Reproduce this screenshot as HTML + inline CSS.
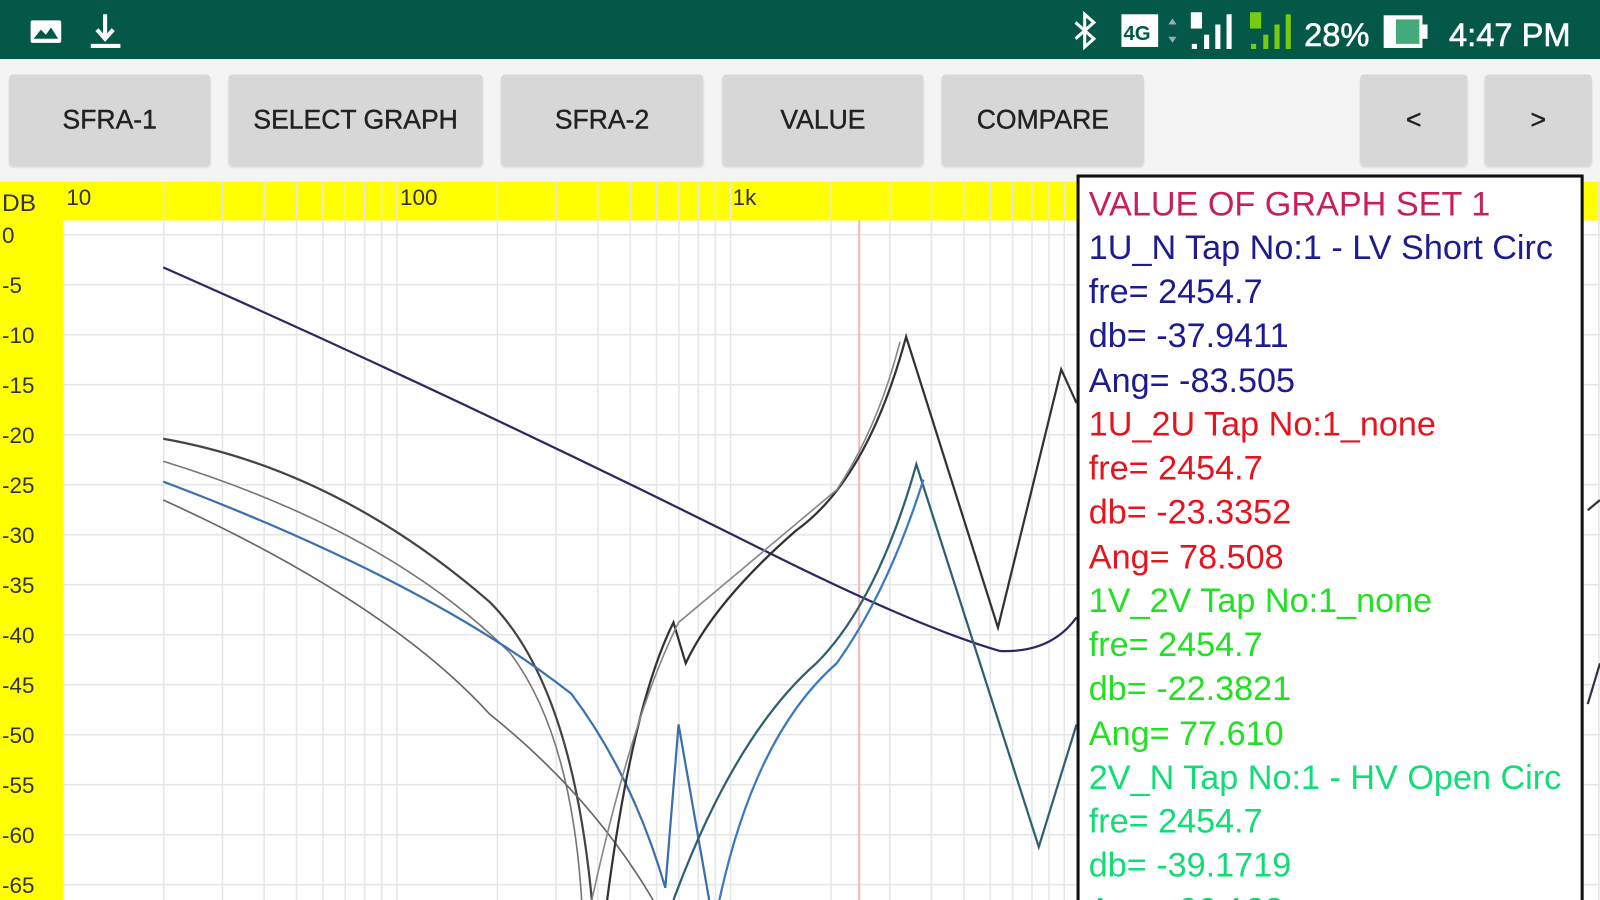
<!DOCTYPE html>
<html><head><meta charset="utf-8"><style>
html,body{margin:0;padding:0;width:1600px;height:900px;overflow:hidden;background:#fff;font-family:"Liberation Sans",sans-serif}
#w{position:absolute;left:0;top:0;width:1568px;height:882px;overflow:hidden;transform-origin:0 0;transform:scale(1.020408,1.020408)}
.sb{position:absolute;left:0;top:0;width:1568px;height:58px;background:#035847}
.tb{position:absolute;left:0;top:58px;width:1568px;height:120px;background:#f4f4f4}
.btn{position:absolute;top:73px;height:89px;background:#d7d7d7;border-radius:4px;box-shadow:0 2px 2px rgba(0,0,0,.12);font-size:26px;color:#222;display:flex;align-items:center;justify-content:center;-webkit-text-stroke:0.4px #222}
.yl{position:absolute;left:0;top:216px;width:62px;height:666px;background:#ffff00}
.yt{position:absolute;left:0;top:178px;width:1568px;height:38px;background:#ffff00}
.box{position:absolute;left:1055px;top:171px;width:491px;height:740px;background:#fff;border:3px solid #111;overflow:hidden}
.box div{position:absolute;left:9px;font-size:33.5px;white-space:nowrap}
</style></head><body><div id="w">
<div class="sb"></div>
<svg style="position:absolute;left:0;top:0" width="1568" height="58">
<rect x="30" y="20" width="30" height="22" fill="#fff" rx="2"/><path d="M33 38 L40 29 L45 34 L50 27 L57 38Z" fill="#035847"/>
<path d="M103 14 V36 M95 29 L103 38 L111 29" stroke="#fff" stroke-width="4" fill="none"/><rect x="89" y="43" width="29" height="4" fill="#fff"/>
<path d="M1054 22 L1072 38 L1063 46 V14 L1072 22 L1054 38" stroke="#fff" stroke-width="3" fill="none"/>
<rect x="1099" y="14" width="36" height="32" fill="#fff"/><text x="1101" y="39" font-size="20" font-weight="bold" fill="#035847" font-family="Liberation Sans">4G</text>
<path d="M1145 24 l4 -6 l4 6z M1145 36 l4 6 l4 -6z" fill="#9ab"/>
<rect x="1167" y="12" width="11" height="16" fill="#fff"/><rect x="1168" y="43" width="5" height="5" fill="#fff"/><rect x="1180" y="34" width="5" height="14" fill="#fff"/><rect x="1191" y="24" width="5" height="24" fill="#fff"/><rect x="1202" y="14" width="5" height="34" fill="#fff"/>
<rect x="1225" y="12" width="11" height="16" fill="#7c1"/><rect x="1226" y="43" width="5" height="5" fill="#7c1"/><rect x="1238" y="34" width="5" height="14" fill="#7c1"/><rect x="1249" y="24" width="5" height="24" fill="#7c1"/><rect x="1260" y="14" width="5" height="34" fill="#7c1"/>
<text x="1278" y="45" font-size="32" fill="#fff" stroke="#fff" stroke-width="0.6" font-family="Liberation Sans">28%</text>
<rect x="1356" y="15" width="38" height="32" fill="#fff"/><rect x="1368" y="19" width="23" height="24" fill="#4a7"/><rect x="1394" y="24" width="5" height="14" fill="#fff"/>
<text x="1420" y="45" font-size="32" fill="#fff" stroke="#fff" stroke-width="0.6" font-family="Liberation Sans">4:47 PM</text>
</svg>
<div class="tb"></div>
<div class="btn" style="left:9px;width:197px">SFRA-1</div>
<div class="btn" style="left:224px;width:249px">SELECT GRAPH</div>
<div class="btn" style="left:491px;width:198px">SFRA-2</div>
<div class="btn" style="left:708px;width:197px">VALUE</div>
<div class="btn" style="left:923px;width:198px">COMPARE</div>
<div class="btn" style="left:1333px;width:105px">&lt;</div>
<div class="btn" style="left:1455px;width:105px">&gt;</div>
<div class="yt"></div><div class="yl"></div>
<svg style="position:absolute;left:0;top:0" width="1568" height="882" id="g">
<g stroke="#e6e6e6" stroke-width="1.5" fill="none" id="grid"></g>
<line x1="842" y1="216" x2="842" y2="882" stroke="#f2b8b8" stroke-width="2"/>
<g fill="none" stroke-width="2.2">
<path d="M160 262 Q450 390 750 540 Q900 615 980 638 Q1030 640 1055 605" stroke="#2a2a60"/>
<path d="M160 430 Q330 460 480 590 Q560 670 580 882" stroke="#444"/>
<path d="M160 452 Q380 520 500 640 Q560 720 570 882" stroke="#777" stroke-width="1.6"/>
<path d="M160 490 Q380 590 480 700 Q580 780 640 882" stroke="#666" stroke-width="1.6"/>
<path d="M160 472 Q420 570 560 680 Q620 760 652 870 L665 710 L695 882" stroke="#3a70b0"/>
<path d="M595 882 Q620 690 660 610 L672 650 Q700 590 780 520 Q850 470 888 330 L978 615 L1040 362 L1055 395" stroke="#333"/>
<path d="M580 882 Q620 700 665 610 Q760 530 820 480 Q860 420 882 335" stroke="#888" stroke-width="1.6"/>
<path d="M660 882 Q720 720 800 650 Q860 590 898 455 L1018 830 L1055 710" stroke="#2e6070"/>
<path d="M705 882 Q740 720 820 650 Q870 580 905 470" stroke="#3a7ac0"/>
<path d="M1556 500 L1568 490 M1556 690 L1568 650" stroke="#334"/>
</g>
<g font-family="Liberation Sans" font-size="22" fill="#333">
<text x="2" y="207" font-size="24">DB</text><text x="65" y="201">10</text><text x="392" y="201">100</text><text x="718" y="201">1k</text>
<text x="2" y="238">0</text><text x="2" y="287">-5</text><text x="2" y="336">-10</text><text x="2" y="385">-15</text><text x="2" y="434">-20</text><text x="2" y="483">-25</text><text x="2" y="532">-30</text><text x="2" y="581">-35</text><text x="2" y="630">-40</text><text x="2" y="679">-45</text><text x="2" y="728">-50</text><text x="2" y="777">-55</text><text x="2" y="826">-60</text><text x="2" y="875">-65</text>
</g>
</svg>
<div class="box">
<div style="top:8px;color:#c81e5a">VALUE OF GRAPH SET 1</div>
<div style="top:51px;color:#1c1c90">1U_N Tap No:1 - LV Short Circ</div>
<div style="top:94px;color:#1c1c90">fre= 2454.7</div>
<div style="top:137px;color:#1c1c90">db= -37.9411</div>
<div style="top:181px;color:#1c1c90">Ang= -83.505</div>
<div style="top:224px;color:#e5141e">1U_2U Tap No:1_none</div>
<div style="top:267px;color:#e5141e">fre= 2454.7</div>
<div style="top:310px;color:#e5141e">db= -23.3352</div>
<div style="top:354px;color:#e5141e">Ang= 78.508</div>
<div style="top:397px;color:#22e022">1V_2V Tap No:1_none</div>
<div style="top:440px;color:#22e022">fre= 2454.7</div>
<div style="top:483px;color:#22e022">db= -22.3821</div>
<div style="top:527px;color:#22e022">Ang= 77.610</div>
<div style="top:570px;color:#11dd77">2V_N Tap No:1 - HV Open Circ</div>
<div style="top:613px;color:#11dd77">fre= 2454.7</div>
<div style="top:656px;color:#11dd77">db= -39.1719</div>
<div style="top:700px;color:#11dd77">Ang= 90.123</div>
</div>
</div>
<script>
var g=document.getElementById('grid'),s='';
for(var d=0;d<5;d++)for(var n=1;n<10;n++){var x=62+327*(d+Math.log10(n));if(x>62&&x<1568)s+='<line x1="'+x+'" y1="178" x2="'+x+'" y2="882"/>';}
for(var k=0;k<14;k++){var y=230+49*k;s+='<line x1="62" y1="'+y+'" x2="1568" y2="'+y+'"/>';}
g.innerHTML=s;
</script>
</body></html>
